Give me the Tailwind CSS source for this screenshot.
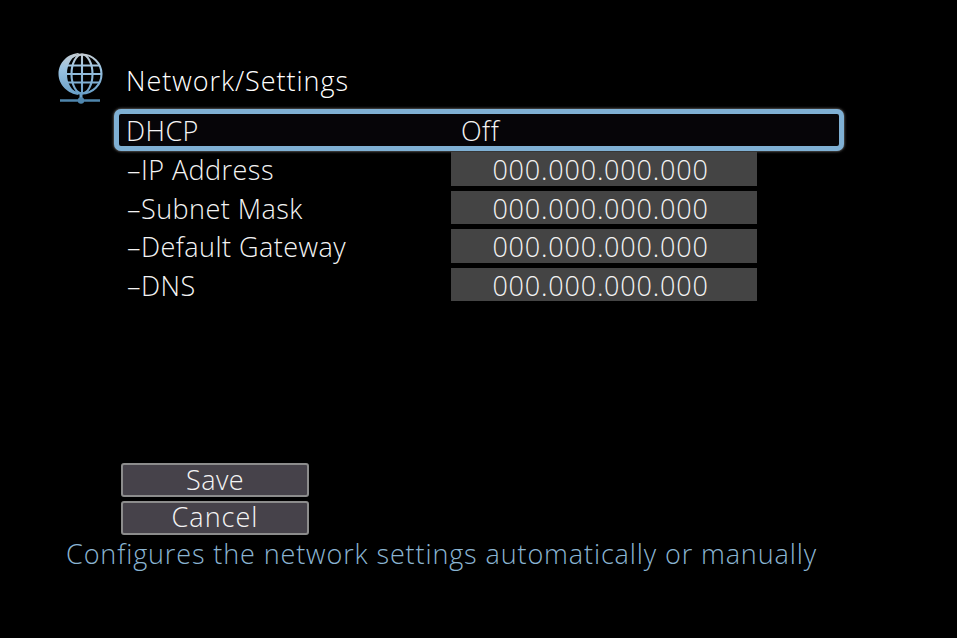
<!DOCTYPE html>
<html lang="en">
<head>
  <meta charset="UTF-8" />
  <title>Network/Settings</title>
  <script src="https://cdn.jsdelivr.net/npm/@tailwindcss/browser@4"></script>
</head>
<body class="bg-black overflow-hidden">
  <div class="w-[957px] h-[638px] bg-black font-['Open_Sans','Liberation_Sans',sans-serif] font-light text-[#f4f4f4] text-[27px] leading-[34px] tracking-[0.45px] pt-[52px]">
    <!-- header -->
    <div class="flex h-[57px] pl-[58px]">
      <svg width="46" height="53" viewBox="0 0 46 53" fill="none">
        <defs>
          <linearGradient id="g" x1="0" y1="0" x2="0" y2="1">
            <stop offset="0" stop-color="#c3ccd2" />
            <stop offset="0.35" stop-color="#9cc4e2" />
            <stop offset="1" stop-color="#6aa0c8" />
          </linearGradient>
        </defs>
        <path d="M22 1C10 1 0.500 10.500 0.500 22C0.500 33 10 42 21 43C13 38 9 31 9 22C9 12 14 4 22 1Z" fill="url(#g)" />
        <g stroke="url(#g)" stroke-width="2.100">
          <circle cx="24" cy="22" r="19.500" />
          <ellipse cx="24" cy="22" rx="10.500" ry="19.500" />
          <path d="M24 2V42M7 13.500H42M5 22H43.500M7 30.500H42" />
        </g>
        <path d="M23 42V47" stroke="#6aa0c8" stroke-width="3" />
        <path d="M2 48.500H42" stroke="#4f86ad" stroke-width="2.500" />
        <circle cx="23" cy="48.500" r="3.200" fill="#4f86ad" />
      </svg>
      <div class="ml-[22px] mt-[12px] text-white tracking-[0.95px]">Network/Settings</div>
    </div>

    <!-- selected row -->
    <div class="ml-[114px] w-[730px] h-[42px] rounded-[7px] border-[5px] border-[#7fb0d4] bg-[#060508] shadow-[0_0_3px_#9a9a9a] flex items-center pl-[7px] pt-[2px]">
      <div class="w-[335px]">DHCP</div>
      <div>Off</div>
    </div>

    <!-- address rows -->
    <div class="mt-[1px] ml-[127px] flex flex-col gap-[5px]">
      <div class="flex h-[33.500px]">
        <div class="w-[324px] pt-[1px]">–IP Address</div>
        <div class="w-[306px] bg-[#444444] text-center tracking-[0.8px] pt-[1px] pr-[7px]">000.000.000.000</div>
      </div>
      <div class="flex h-[33.500px]">
        <div class="w-[324px] pt-[1px]">–Subnet Mask</div>
        <div class="w-[306px] bg-[#444444] text-center tracking-[0.8px] pt-[1px] pr-[7px]">000.000.000.000</div>
      </div>
      <div class="flex h-[33.500px]">
        <div class="w-[324px] pt-[1px]">–Default Gateway</div>
        <div class="w-[306px] bg-[#444444] text-center tracking-[0.8px] pt-[1px] pr-[7px]">000.000.000.000</div>
      </div>
      <div class="flex h-[33.500px]">
        <div class="w-[324px] pt-[1px]">–DNS</div>
        <div class="w-[306px] bg-[#444444] text-center tracking-[0.8px] pt-[1px] pr-[7px]">000.000.000.000</div>
      </div>
    </div>

    <!-- buttons -->
    <div class="mt-[162px] ml-[121px] flex flex-col gap-[4px] w-[188px]">
      <div class="h-[34px] rounded-[3px] border-2 border-[#8c8c8c] bg-[#46424a] flex items-center justify-center">Save</div>
      <div class="h-[34px] rounded-[3px] border-2 border-[#8c8c8c] bg-[#46424a] flex items-center justify-center pb-[2px] tracking-[1px]">Cancel</div>
    </div>

    <div class="mt-[2px] ml-[66px] text-[#8ab4d2] tracking-[0.88px] whitespace-nowrap">Configures the network settings automatically or manually</div>
  </div>
</body>
</html>
